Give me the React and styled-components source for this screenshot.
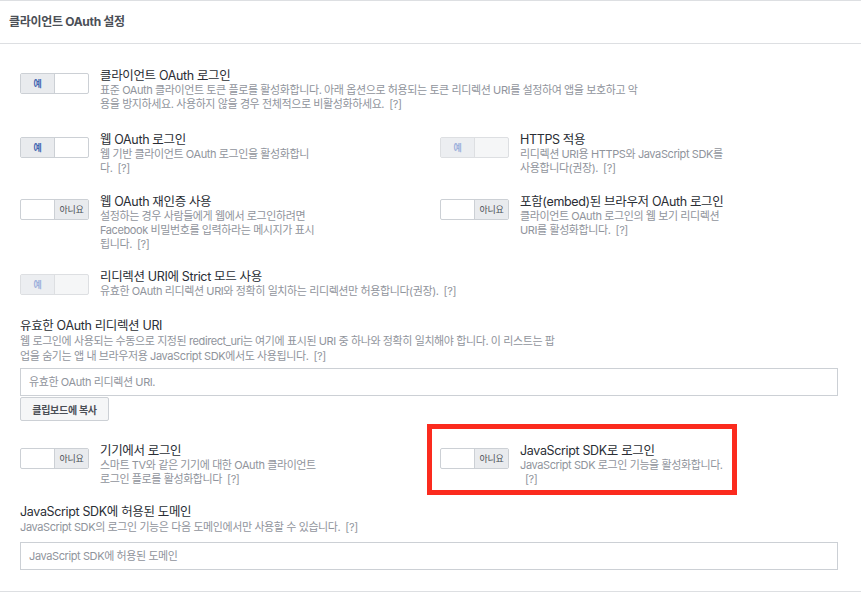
import React from 'react'
import styled, { createGlobalStyle, css } from 'styled-components'

const GlobalStyle = createGlobalStyle`
    body {
        margin: 0;
        background: #fff;
        font-family: Inter, "Noto Sans CJK KR", sans-serif;
        -webkit-font-smoothing: antialiased;
    }
`

const Panel = styled.div`
    width: 861px;
    border-top: 1px solid #dddfe2;
    border-bottom: 1px solid #dddfe2;
`

const PanelHeader = styled.div`
    height: 42px;
    line-height: 42px;
    padding-left: 9px;
    border-bottom: 1px solid #dddfe2;
    font-size: 12px;
    font-weight: 700;
    letter-spacing: -0.3px;
    color: #4b4f56;
`

const PanelBody = styled.div`
    display: flex;
    flex-direction: column;
    padding: 24px 22px 21px 20px;
`

const Line = styled.div`
    display: grid;
    grid-template-columns: ${props => (props.full ? '1fr' : '420px 1fr')};
    margin-top: ${props => props.mt || 0}px;
`

const Item = styled.div`
    position: relative;
    display: flex;
    align-items: flex-start;
    gap: 11px;
    ${props =>
        props.highlight &&
        css`
            &::after {
                content: '';
                position: absolute;
                left: -13px;
                top: -19px;
                width: 310px;
                height: 71px;
                border: 5px solid #fb2b1e;
                box-sizing: border-box;
                pointer-events: none;
            }
        `}
`

const Switch = styled.div`
    flex: none;
    display: flex;
    width: 69px;
    height: 21px;
    margin-top: 5px;
    box-sizing: border-box;
    border: 1px solid ${props => (props.disabled ? '#dddfe2' : '#ccd0d5')};
    border-radius: 2px;
    overflow: hidden;
    background: ${props => (props.disabled ? '#f5f6f7' : '#fff')};
`

const SwitchCell = styled.div`
    flex: 1;
    display: flex;
    align-items: center;
    justify-content: center;
    font-size: 9px;
    letter-spacing: -0.3px;
    ${props =>
        props.active &&
        css`
            background: ${props.disabled ? '#eceef1' : '#e9ebee'};
            border-${props.side}: 1px solid ${props.disabled ? '#dddfe2' : '#ccd0d5'};
        `}
    color: ${props => (props.yes ? (props.disabled ? '#9db1dc' : '#4267b2') : '#4b4f56')};
    font-weight: ${props => (props.yes ? 600 : 400)};
`

const Texts = styled.div`
    min-width: 0;
`

const Title = styled.div`
    font-size: 12.5px;
    line-height: 15px;
    letter-spacing: -0.35px;
    color: #2a2e35;
`

const Desc = styled.div`
    max-width: ${props => props.width}px;
    font-size: 11px;
    line-height: 14px;
    letter-spacing: -0.4px;
    color: #90949c;
`

const Help = styled.span`
    margin-left: 5px;
    color: #90949c;
`

const Section = styled.div`
    display: flex;
    flex-direction: column;
    margin-top: ${props => props.mt || 0}px;
`

const SectionDesc = styled(Desc)`
    line-height: 15px;
    margin-top: 1px;
`

const Input = styled.input`
    width: 818px;
    height: 28px;
    margin: ${props => props.mt}px 0 0;
    padding: 0 8px;
    box-sizing: border-box;
    border: 1px solid #ccd0d5;
    border-radius: 0;
    font-family: inherit;
    font-size: 11px;
    letter-spacing: -0.4px;
    color: #1d2129;
    outline: none;
    &::placeholder {
        color: #90949c;
    }
`

const CopyButton = styled.button`
    align-self: flex-start;
    width: 89px;
    height: 24px;
    margin-top: 1px;
    padding: 0;
    border: 1px solid #ccd0d5;
    border-radius: 2px;
    background: #f5f6f7;
    font-family: inherit;
    font-size: 10px;
    font-weight: 700;
    letter-spacing: -0.3px;
    color: #4b4f56;
`

const Toggle = ({ on, disabled }) => (
    <Switch disabled={disabled}>
        <SwitchCell active={on} yes side="right" disabled={disabled}>
            {on ? '예' : ''}
        </SwitchCell>
        <SwitchCell active={!on} side="left" disabled={disabled}>
            {on ? '' : '아니요'}
        </SwitchCell>
    </Switch>
)

const Setting = ({ item, width }) => (
    <Item highlight={item.highlight}>
        <Toggle on={item.on} disabled={item.disabled} />
        <Texts>
            <Title>{item.title}</Title>
            <Desc width={item.width || width}>
                {item.desc}
                <Help>[?]</Help>
            </Desc>
        </Texts>
    </Item>
)

// column widths for the two-column rows: left, right
const colWidths = [218, 212]

const lines = [
    {
        mt: 0,
        items: [
            {
                on: true,
                title: '클라이언트 OAuth 로그인',
                desc: '표준 OAuth 클라이언트 토큰 플로를 활성화합니다. 아래 옵션으로 허용되는 토큰 리디렉션 URI를 설정하여 앱을 보호하고 악용을 방지하세요. 사용하지 않을 경우 전체적으로 비활성화하세요.',
                width: 540,
            },
        ],
    },
    {
        mt: 21,
        items: [
            {
                on: true,
                title: '웹 OAuth 로그인',
                desc: '웹 기반 클라이언트 OAuth 로그인을 활성화합니다.',
            },
            {
                on: true,
                disabled: true,
                title: 'HTTPS 적용',
                desc: '리디렉션 URI용 HTTPS와 JavaScript SDK를 사용합니다(권장).',
            },
        ],
    },
    {
        mt: 19,
        items: [
            {
                on: false,
                title: '웹 OAuth 재인증 사용',
                desc: '설정하는 경우 사람들에게 웹에서 로그인하려면 Facebook 비밀번호를 입력하라는 메시지가 표시됩니다.',
            },
            {
                on: false,
                title: '포함(embed)된 브라우저 OAuth 로그인',
                desc: '클라이언트 OAuth 로그인의 웹 보기 리디렉션 URI를 활성화합니다.',
            },
        ],
    },
    {
        mt: 18,
        items: [
            {
                on: true,
                disabled: true,
                title: '리디렉션 URI에 Strict 모드 사용',
                desc: '유효한 OAuth 리디렉션 URI와 정확히 일치하는 리디렉션만 허용합니다(권장).',
                width: 540,
            },
        ],
    },
]

const deviceLine = [
    {
        on: false,
        title: '기기에서 로그인',
        desc: '스마트 TV와 같은 기기에 대한 OAuth 클라이언트 로그인 플로를 활성화합니다',
    },
    {
        on: false,
        highlight: true,
        title: 'JavaScript SDK로 로그인',
        desc: 'JavaScript SDK 로그인 기능을 활성화합니다.',
    },
]

const App = () => {
    return (
        <Panel>
            <GlobalStyle />
            <PanelHeader>클라이언트 OAuth 설정</PanelHeader>
            <PanelBody>
                {lines.map((line, index) => (
                    <Line key={index} mt={line.mt} full={line.items.length === 1}>
                        {line.items.map((item, i) => (
                            <Setting key={item.title} item={item} width={colWidths[i]} />
                        ))}
                    </Line>
                ))}
                <Section mt={20}>
                    <Title>유효한 OAuth 리디렉션 URI</Title>
                    <SectionDesc width={540}>
                        웹 로그인에 사용되는 수동으로 지정된 redirect_uri는 여기에 표시된 URI 중 하나와 정확히 일치해야 합니다. 이 리스트는 팝업을 숨기는 앱 내 브라우저용 JavaScript SDK에서도 사용됩니다.
                        <Help>[?]</Help>
                    </SectionDesc>
                    <Input mt={4} placeholder="유효한 OAuth 리디렉션 URI." />
                    <CopyButton>클립보드에 복사</CopyButton>
                </Section>
                <Line mt={22}>
                    {deviceLine.map((item, i) => (
                        <Setting key={item.title} item={item} width={colWidths[i]} />
                    ))}
                </Line>
                <Section mt={18}>
                    <Title>JavaScript SDK에 허용된 도메인</Title>
                    <SectionDesc width={600}>
                        JavaScript SDK의 로그인 기능은 다음 도메인에서만 사용할 수 있습니다.
                        <Help>[?]</Help>
                    </SectionDesc>
                    <Input mt={7} placeholder="JavaScript SDK에 허용된 도메인" />
                </Section>
            </PanelBody>
        </Panel>
    )
}

export default App
